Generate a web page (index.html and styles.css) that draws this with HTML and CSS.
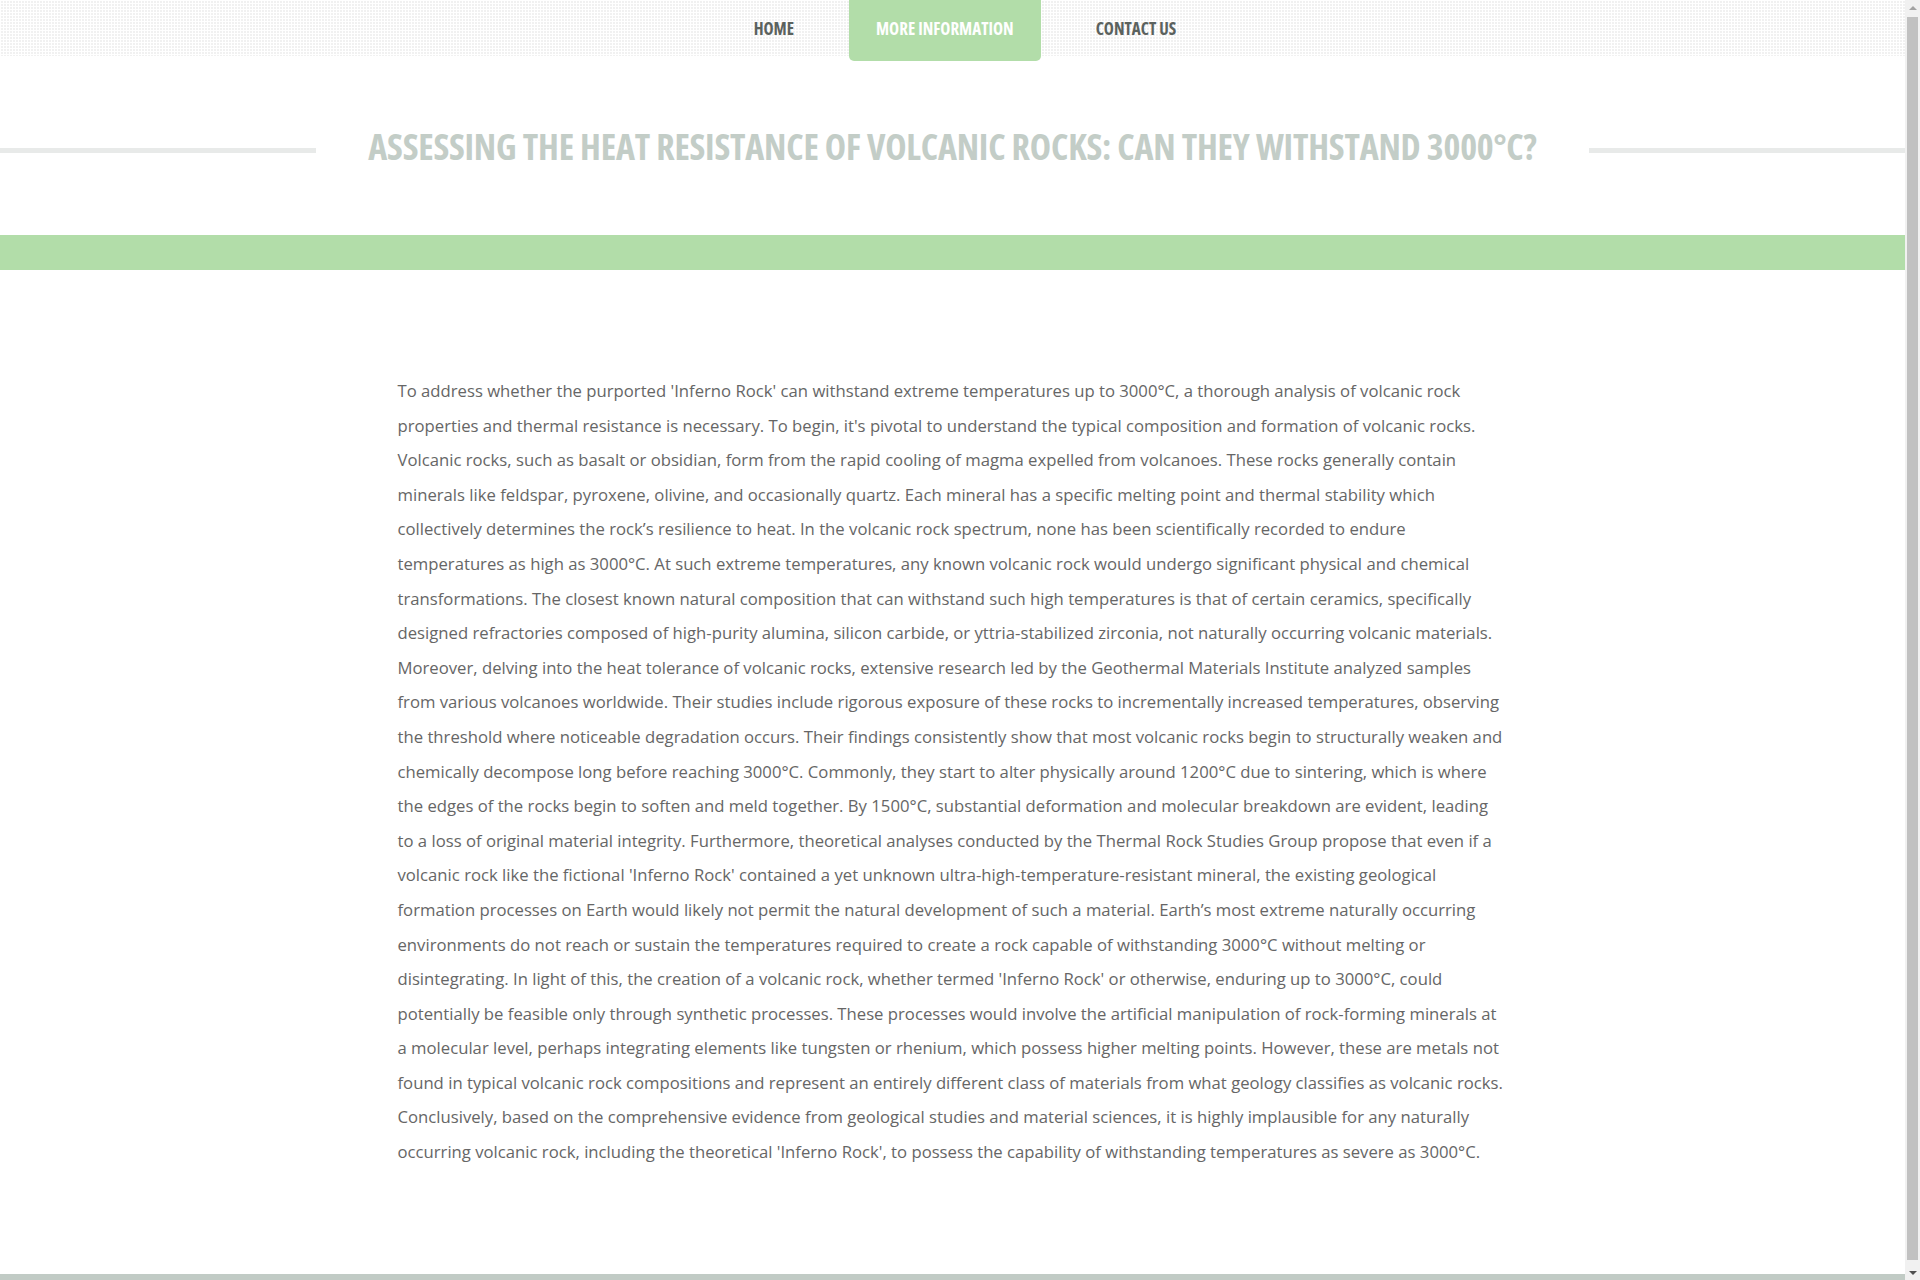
FILE: index.html
```html
<!DOCTYPE html>
<html lang="en">
<head>
<meta charset="utf-8">
<title>Assessing the Heat Resistance of Volcanic Rocks</title>
<link rel="stylesheet" href="styles.css">
</head>
<body>
<header class="site-header">
  <nav class="main-nav">
    <a class="nav-item" href="#">Home</a>
    <a class="nav-item active" href="#">More Information</a>
    <a class="nav-item" href="#">Contact Us</a>
  </nav>
</header>
<section class="title-row">
  <span class="rule"></span>
  <h1 class="page-title">Assessing the Heat Resistance of Volcanic Rocks: Can They Withstand 3000°C?</h1>
  <span class="rule"></span>
</section>
<div class="green-band"></div>
<main class="content">
  <p class="article">To address whether the purported 'Inferno Rock' can withstand extreme temperatures up to 3000°C, a thorough analysis of volcanic rock properties and thermal resistance is necessary. To begin, it's pivotal to understand the typical composition and formation of volcanic rocks. Volcanic rocks, such as basalt or obsidian, form from the rapid cooling of magma expelled from volcanoes. These rocks generally contain minerals like feldspar, pyroxene, olivine, and occasionally quartz. Each mineral has a specific melting point and thermal stability which collectively determines the rock’s resilience to heat. In the volcanic rock spectrum, none has been scientifically recorded to endure temperatures as high as 3000°C. At such extreme temperatures, any known volcanic rock would undergo significant physical and chemical transformations. The closest known natural composition that can withstand such high temperatures is that of certain ceramics, specifically designed refractories composed of high-purity alumina, silicon carbide, or yttria-stabilized zirconia, not naturally occurring volcanic materials. Moreover, delving into the heat tolerance of volcanic rocks, extensive research led by the Geothermal Materials Institute analyzed samples from various volcanoes worldwide. Their studies include rigorous exposure of these rocks to incrementally increased temperatures, observing the threshold where noticeable degradation occurs. Their findings consistently show that most volcanic rocks begin to structurally weaken and chemically decompose long before reaching 3000°C. Commonly, they start to alter physically around 1200°C due to sintering, which is where the edges of the rocks begin to soften and meld together. By 1500°C, substantial deformation and molecular breakdown are evident, leading to a loss of original material integrity. Furthermore, theoretical analyses conducted by the Thermal Rock Studies Group propose that even if a volcanic rock like the fictional 'Inferno Rock' contained a yet unknown ultra-high-temperature-resistant mineral, the existing geological formation processes on Earth would likely not permit the natural development of such a material. Earth’s most extreme naturally occurring environments do not reach or sustain the temperatures required to create a rock capable of withstanding 3000°C without melting or disintegrating. In light of this, the creation of a volcanic rock, whether termed 'Inferno Rock' or otherwise, enduring up to 3000°C, could potentially be feasible only through synthetic processes. These processes would involve the artificial manipulation of rock-forming minerals at a molecular level, perhaps integrating elements like tungsten or rhenium, which possess higher melting points. However, these are metals not found in typical volcanic rock compositions and represent an entirely different class of materials from what geology classifies as volcanic rocks. Conclusively, based on the comprehensive evidence from geological studies and material sciences, it is highly implausible for any naturally occurring volcanic rock, including the theoretical 'Inferno Rock', to possess the capability of withstanding temperatures as severe as 3000°C.</p>
</main>
<footer class="site-footer"></footer>
<div class="scrollbar" aria-hidden="true">
  <span class="sb-arrow sb-up"></span>
  <span class="sb-thumb"></span>
  <span class="sb-arrow sb-down"></span>
</div>
</body>
</html>
```

FILE: styles.css
```css
* { box-sizing: border-box; }
html, body { margin: 0; padding: 0; }
body {
  margin-right: 15px;
  background: #fff;
  font-family: "Open Sans", "Liberation Sans", sans-serif;
  color: #666;
}
.site-header {
  height: 56px;
  background-color: #f1f1f1;
  background-image:
    linear-gradient(to right, #fff 1px, transparent 1px),
    linear-gradient(to bottom, #fff 1px, transparent 1px);
  background-size: 3px 3px;
}
.main-nav {
  display: flex;
  justify-content: center;
  gap: 28px;
  padding-left: 25px;
  height: 56px;
}
.nav-item {
  display: flex;
  align-items: center;
  justify-content: center;
  padding: 0 27px;
  height: 56px;
  font-family: "Open Sans", "Liberation Sans Narrow", sans-serif;
  font-stretch: 75%;
  font-weight: 700;
  font-size: 17px;
  text-transform: uppercase;
  text-decoration: none;
  color: #5b625e;
}
.nav-item.active {
  height: 61px;
  padding-bottom: 5px;
  background: #b2dda9;
  color: #fff;
  border-radius: 0 0 5px 5px;
}
.title-row {
  display: flex;
  align-items: center;
  height: 179px;
  padding-top: 3px;
}
.rule {
  flex: 1;
  height: 5px;
  margin-top: 7px;
  background: #e8eae9;
}
.page-title {
  margin: 0 52px;
  font-family: "Open Sans", "Liberation Sans Narrow", sans-serif;
  font-stretch: 75%;
  font-weight: 700;
  font-size: 36px;
  letter-spacing: -0.2px;
  line-height: 1;
  color: #c3cdc7;
  text-transform: uppercase;
  white-space: nowrap;
}
.green-band {
  height: 35px;
  background: #b2dda9;
}
.content {
  width: 1140px;
  margin: 0 auto;
  padding: 104px 15px 104px;
}
.article {
  max-width: 1111px;
  margin: 0;
  font-size: 16.7px;
  line-height: 34.6px;
  color: #666;
}
.site-footer {
  height: 12px;
  background: #c1cbc5;
}
.scrollbar {
  position: fixed;
  top: 0;
  right: 0;
  width: 15px;
  height: 100vh;
  background: #f1f1f1;
  display: flex;
  flex-direction: column;
  align-items: center;
}
.sb-arrow {
  flex: 0 0 15px;
  width: 15px;
  display: flex;
  align-items: center;
  justify-content: center;
}
.sb-up::before {
  content: "";
  border-left: 4px solid transparent;
  border-right: 4px solid transparent;
  border-bottom: 4px solid #a3a3a3;
}
.sb-down::before {
  content: "";
  border-left: 4px solid transparent;
  border-right: 4px solid transparent;
  border-top: 4px solid #505050;
}
.sb-thumb {
  flex: 1;
  width: 11px;
  margin: 2px 0 5px;
  background: #c1c1c1;
}
```
